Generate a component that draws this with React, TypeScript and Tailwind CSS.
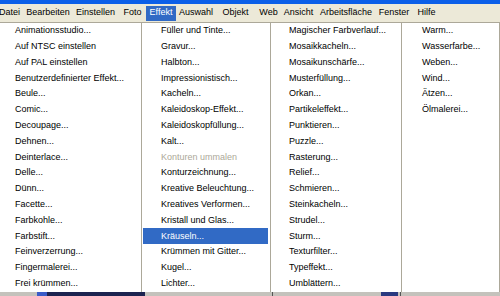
import React from "react";

const menubar = [
  { label: "Datei", w: "w-[29px]" },
  { label: "Bearbeiten", w: "w-[48px]" },
  { label: "Einstellen", w: "w-[47px]" },
  { label: "Foto", w: "w-[27px]" },
  { label: "Effekt", w: "w-[30px]", active: true },
  { label: "Auswahl", w: "w-[40px]" },
  { label: "Objekt", w: "w-[39px]" },
  { label: "Web", w: "w-[27px]" },
  { label: "Ansicht", w: "w-[33px]" },
  { label: "Arbeitsfläche", w: "w-[62px]" },
  { label: "Fenster", w: "w-[34px]" },
  { label: "Hilfe", w: "w-[31px]" },
];

type Item = { label: string; disabled?: boolean; selected?: boolean };

const columns: { items: Item[]; w: string; pl: string; pr: string }[] = [
  {
    w: "w-[141px]",
    pl: "pl-[15px]",
    pr: "pr-[3px]",
    items: [
      { label: "Animationsstudio..." },
      { label: "Auf NTSC einstellen" },
      { label: "Auf PAL einstellen" },
      { label: "Benutzerdefinierter Effekt..." },
      { label: "Beule..." },
      { label: "Comic..." },
      { label: "Decoupage..." },
      { label: "Dehnen..." },
      { label: "Deinterlace..." },
      { label: "Delle..." },
      { label: "Dünn..." },
      { label: "Facette..." },
      { label: "Farbkohle..." },
      { label: "Farbstift..." },
      { label: "Feinverzerrung..." },
      { label: "Fingermalerei..." },
      { label: "Frei krümmen..." },
    ],
  },
  {
    w: "w-[127px]",
    pl: "pl-[18px]",
    pr: "pr-[2px]",
    items: [
      { label: "Füller und Tinte..." },
      { label: "Gravur..." },
      { label: "Halbton..." },
      { label: "Impressionistisch..." },
      { label: "Kacheln..." },
      { label: "Kaleidoskop-Effekt..." },
      { label: "Kaleidoskopfüllung..." },
      { label: "Kalt..." },
      { label: "Konturen ummalen", disabled: true },
      { label: "Konturzeichnung..." },
      { label: "Kreative Beleuchtung..." },
      { label: "Kreatives Verformen..." },
      { label: "Kristall und Glas..." },
      { label: "Kräuseln...", selected: true },
      { label: "Krümmen mit Gitter..." },
      { label: "Kugel..." },
      { label: "Lichter..." },
    ],
  },
  {
    w: "w-[129px]",
    pl: "pl-[17px]",
    pr: "pr-[3px]",
    items: [
      { label: "Magischer Farbverlauf..." },
      { label: "Mosaikkacheln..." },
      { label: "Mosaikunschärfe..." },
      { label: "Musterfüllung..." },
      { label: "Orkan..." },
      { label: "Partikeleffekt..." },
      { label: "Punktieren..." },
      { label: "Puzzle..." },
      { label: "Rasterung..." },
      { label: "Relief..." },
      { label: "Schmieren..." },
      { label: "Steinkacheln..." },
      { label: "Strudel..." },
      { label: "Sturm..." },
      { label: "Texturfilter..." },
      { label: "Typeffekt..." },
      { label: "Umblättern..." },
    ],
  },
  {
    w: "flex-1",
    pl: "pl-[19px]",
    pr: "pr-[3px]",
    items: [
      { label: "Warm..." },
      { label: "Wasserfarbe..." },
      { label: "Weben..." },
      { label: "Wind..." },
      { label: "Ätzen..." },
      { label: "Ölmalerei..." },
    ],
  },
];

export default function App() {
  return (
    <div
      className="w-[500px] h-[296px] overflow-hidden bg-white flex flex-col text-[9px] text-black"
      style={{ fontFamily: '"Liberation Sans", Arial, sans-serif' }}
    >
      {/* title bar, only its lower edge is visible */}
      <div className="h-[4px] bg-[#0b5fe8] shrink-0" />

      {/* menubar */}
      <div className="h-[18px] bg-[#ece9d8] flex items-center shrink-0">
        <div className="flex ml-[-5px]">
          {menubar.map((m) => (
            <div
              key={m.label}
              className={`${m.w} h-[15px] flex items-center justify-center whitespace-nowrap ${
                m.active ? "bg-[#316ac5] text-white" : ""
              }`}
            >
              {m.label}
            </div>
          ))}
        </div>
      </div>

      {/* dropdown */}
      <div className="flex-1 flex border-t border-[#aca899] border-r-[1px] border-r-[#aca899] bg-white">
        {columns.map((col, ci) => (
          <React.Fragment key={ci}>
            {ci > 0 && <div className="w-[2px] shrink-0 border-l border-[#aca899] bg-white" />}
            <div className={`${col.w} ${col.pr} shrink-0 flex flex-col`}>
              {col.items.map((it) => (
                <div
                  key={it.label}
                  className={`h-[15.8px] ${col.pl} flex items-center whitespace-nowrap ${
                    it.selected ? "bg-[#316ac5] text-white" : it.disabled ? "text-[#aca899]" : ""
                  }`}
                >
                  {it.label}
                </div>
              ))}
            </div>
          </React.Fragment>
        ))}
      </div>

      {/* workspace below the menu */}
      <div className="h-[4px] shrink-0 bg-[#c4c2bc] flex">
        <div className="w-[37px]" />
        <div className="w-[108px] bg-[#1c2350] flex">
          <div className="w-[10px] bg-[#3a5bc8]" />
        </div>
        <div className="w-[128px] border-r border-[#555]" />
        <div className="w-[108px]" />
        <div className="w-[17px] bg-[#2a3a80]" />
        <div className="w-[3px] border-r border-[#555]" />
      </div>
    </div>
  );
}
